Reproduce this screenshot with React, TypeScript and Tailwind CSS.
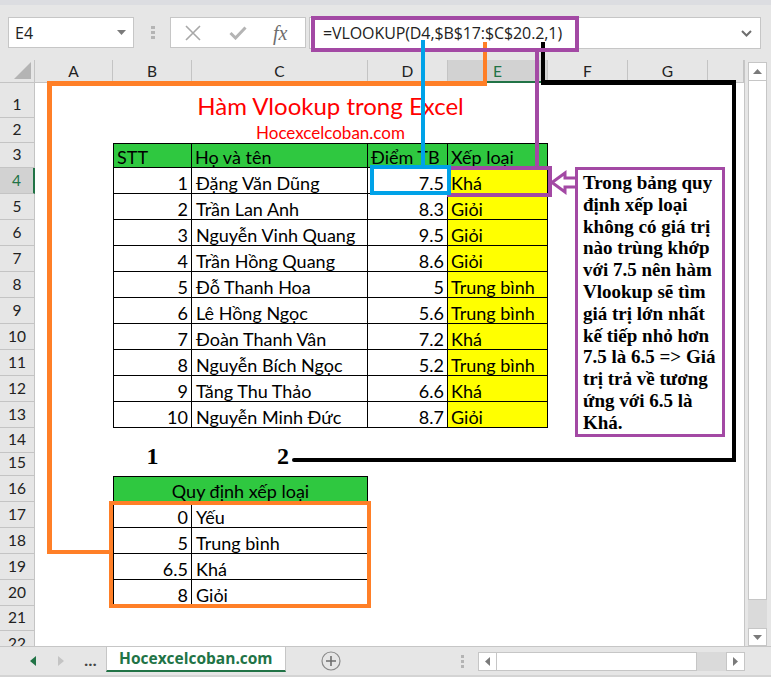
import React from 'react';

type Student = [number, string, string, string];

const students: Student[] = [
  [1, 'Đặng Văn Dũng', '7.5', 'Khá'],
  [2, 'Trần Lan Anh', '8.3', 'Giỏi'],
  [3, 'Nguyễn Vinh Quang', '9.5', 'Giỏi'],
  [4, 'Trần Hồng Quang', '8.6', 'Giỏi'],
  [5, 'Đỗ Thanh Hoa', '5', 'Trung bình'],
  [6, 'Lê Hồng Ngọc', '5.6', 'Trung bình'],
  [7, 'Đoàn Thanh Vân', '7.2', 'Khá'],
  [8, 'Nguyễn Bích Ngọc', '5.2', 'Trung bình'],
  [9, 'Tăng Thu Thảo', '6.6', 'Khá'],
  [10, 'Nguyễn Minh Đức', '8.7', 'Giỏi'],
];

const rules: [string, string][] = [
  ['0', 'Yếu'],
  ['5', 'Trung bình'],
  ['6.5', 'Khá'],
  ['8', 'Giỏi'],
];

const letters = ['A', 'B', 'C', 'D', 'E', 'F', 'G', ''];

function Cell({ className = '', children }: { className?: string; children?: React.ReactNode }) {
  return <div className={`flex items-end whitespace-nowrap overflow-visible ${className}`}>{children}</div>;
}

function Blank() {
  return <div className="bg-white" />;
}

function rowCells(r: number): React.ReactNode[] {
  const k = (c: string) => `${r}-${c}`;
  if (r === 1) {
    return [
      <Blank key={k('a')} />,
      <Cell key={k('t')} className="col-span-4 justify-center text-[24px] leading-[24px] text-[#ff0000]">
        Hàm Vlookup trong Excel
      </Cell>,
      <Blank key={k('f')} />,
      <Blank key={k('g')} />,
      <Blank key={k('h')} />,
    ];
  }
  if (r === 2) {
    return [
      <Blank key={k('a')} />,
      <Cell key={k('t')} className="col-span-4 justify-center text-[17px] leading-[20px] text-[#ff0000]">
        Hocexcelcoban.com
      </Cell>,
      <Blank key={k('f')} />,
      <Blank key={k('g')} />,
      <Blank key={k('h')} />,
    ];
  }
  if (r === 3) {
    const hd = 'bg-[#2fc840] border-t border-r border-b border-black pl-[3px]';
    return [
      <Blank key={k('a')} />,
      <Cell key={k('b')} className={`${hd} border-l`}>STT</Cell>,
      <Cell key={k('c')} className={hd}>Họ và tên</Cell>,
      <Cell key={k('d')} className={hd}>Điểm TB</Cell>,
      <Cell key={k('e')} className={hd}>Xếp loại</Cell>,
      <Blank key={k('f')} />,
      <Blank key={k('g')} />,
      <Blank key={k('h')} />,
    ];
  }
  if (r >= 4 && r <= 13) {
    const [stt, name, score, grade] = students[r - 4];
    return [
      <Blank key={k('a')} />,
      <Cell key={k('b')} className="border-l border-r border-b border-black justify-end pr-[3px]">{stt}</Cell>,
      <Cell key={k('c')} className="border-r border-b border-black pl-[4px]">{name}</Cell>,
      <Cell key={k('d')} className="border-r border-b border-black justify-end pr-[3px]">{score}</Cell>,
      <Cell key={k('e')} className="bg-[#ffff00] border-r border-b border-black pl-[3px]">{grade}</Cell>,
      <Blank key={k('f')} />,
      <Blank key={k('g')} />,
      <Blank key={k('h')} />,
    ];
  }
  if (r === 15) {
    const num = "justify-center pb-[8px] [font-family:'Liberation_Serif',serif] font-bold text-[24px] leading-[24px]";
    return [
      <Blank key={k('a')} />,
      <Cell key={k('b')} className={num}>1</Cell>,
      <Cell key={k('c')} className={`${num} pl-[6px]`}>2</Cell>,
      <Blank key={k('d')} />,
      <Blank key={k('e')} />,
      <Blank key={k('f')} />,
      <Blank key={k('g')} />,
      <Blank key={k('h')} />,
    ];
  }
  if (r === 16) {
    return [
      <Blank key={k('a')} />,
      <Cell key={k('t')} className="col-span-2 justify-center bg-[#2fc840] border border-black">
        Quy định xếp loại
      </Cell>,
      <Blank key={k('d')} />,
      <Blank key={k('e')} />,
      <Blank key={k('f')} />,
      <Blank key={k('g')} />,
      <Blank key={k('h')} />,
    ];
  }
  if (r >= 17 && r <= 20) {
    const [v, label] = rules[r - 17];
    return [
      <Blank key={k('a')} />,
      <Cell key={k('b')} className="border-l border-r border-b border-black justify-end pr-[3px]">{v}</Cell>,
      <Cell key={k('c')} className="border-r border-b border-black pl-[4px]">{label}</Cell>,
      <Blank key={k('d')} />,
      <Blank key={k('e')} />,
      <Blank key={k('f')} />,
      <Blank key={k('g')} />,
      <Blank key={k('h')} />,
    ];
  }
  return letters.map((l, i) => <Blank key={k(`x${i}${l}`)} />);
}

function FormulaBar() {
  return (
    <div className="h-[60px] bg-[#e6e6e6] border-t-[5px] border-[#dcdde1] flex items-start pt-[12px] [font-family:'Open_Sans',sans-serif]">
      {/* name box */}
      <div className="ml-[8px] w-[126px] h-[31px] bg-white border border-[#c6c6c6] flex items-center justify-between pl-[6px] pr-[7px]">
        <span className="text-[16px] text-[#222]">E4</span>
        <svg width="9" height="5" viewBox="0 0 9 5">
          <polygon points="0,0 9,0 4.5,5" fill="#7a7a7a" />
        </svg>
      </div>
      <div className="ml-[17px] mt-[9px] flex flex-col gap-[2px]">
        <div className="w-[4px] h-[3px] bg-[#b4b4b4]" />
        <div className="w-[4px] h-[3px] bg-[#b4b4b4]" />
        <div className="w-[4px] h-[3px] bg-[#b4b4b4]" />
      </div>
      {/* cancel / enter / fx */}
      <div className="ml-[15px] w-[136px] h-[31px] bg-white border border-[#c6c6c6] flex items-center pl-[14px]">
        <svg width="16" height="16" viewBox="0 0 16 16">
          <path d="M1 1 L15 15 M15 1 L1 15" stroke="#a8a8a8" strokeWidth="1.6" />
        </svg>
        <svg className="ml-[28px]" width="18" height="14" viewBox="0 0 18 14">
          <path d="M1.5 7 L6.5 12 L16.5 1.5" stroke="#b4b4b4" strokeWidth="3" fill="none" />
        </svg>
        <span className="ml-[26px] [font-family:'Liberation_Serif',serif] italic text-[20px] text-[#6e6e6e] leading-none">
          fx
        </span>
      </div>
      {/* formula input */}
      <div className="ml-[3px] w-[452px] h-[32px] bg-white border border-[#c6c6c6] flex items-center justify-between pl-[13px] pr-[8px]">
        <span className="text-[16px] text-[#222] tracking-[-0.1px]">=VLOOKUP(D4,$B$17:$C$20.2,1)</span>
        <svg width="11" height="7" viewBox="0 0 11 7">
          <path d="M1 1 L5.5 5.5 L10 1" stroke="#6e6e6e" strokeWidth="2" fill="none" />
        </svg>
      </div>
    </div>
  );
}

function rowHeadClass(r: number) {
  if (r === 4) {
    return 'bg-[#d2d2d2] border-b border-[#c4c4c4] border-r-2 border-r-[#217346] text-[#217346] flex items-end justify-center pb-[3px] text-[15.5px]';
  }
  if (r === 22) {
    return 'bg-[#e6e6e6] border-r border-[#c4c4c4] flex items-start justify-center pt-[2px] overflow-hidden text-[15.5px] text-[#222]';
  }
  return 'bg-[#e6e6e6] border-b border-r border-[#c4c4c4] flex items-end justify-center pb-[3px] text-[15.5px] text-[#222]';
}

function Sheet() {
  const rows = Array.from({ length: 22 }, (_, i) => i + 1);
  return (
    <div className="grid grid-cols-[35px_78px_79px_176px_80px_100px_80px_80px_36px] grid-rows-[23px_35px_25px_25px_repeat(10,26px)_25px_23px_26px_repeat(4,26px)_25px_15px] w-[744px] h-[586px] overflow-hidden bg-white [font-family:Lato,sans-serif] text-[18px] leading-[20px] text-black">
      <div className="bg-[#e6e6e6] border-r border-b border-[#c4c4c4] flex items-end justify-end pr-[3px] pb-[3px]">
        <svg width="17" height="17" viewBox="0 0 17 17">
          <polygon points="17,0 17,17 0,17" fill="#b4b4b4" />
        </svg>
      </div>
      {letters.map((l, i) => (
        <div
          key={`h${i}`}
          className={
            l === 'E'
              ? 'bg-[#d2d2d2] border-r border-[#c4c4c4] border-b-2 border-b-[#217346] text-[#217346] flex items-center justify-center text-[15.5px]'
              : 'bg-[#e6e6e6] border-r border-b border-[#c4c4c4] flex items-center justify-center text-[15.5px] text-[#222]'
          }
        >
          {l}
        </div>
      ))}
      {rows.map((r) => (
        <React.Fragment key={`r${r}`}>
          <div className={rowHeadClass(r)}>{r}</div>
          {rowCells(r)}
        </React.Fragment>
      ))}
    </div>
  );
}

function VScroll() {
  return (
    <div className="w-[27px] h-[586px] bg-[#e6e6e6] border-l border-[#c6c6c6] flex flex-col pl-[3px] pr-[4px] pt-[2px]">
      <div className="h-[19px] bg-white border border-[#c6c6c6] flex items-center justify-center">
        <svg width="9" height="5" viewBox="0 0 9 5">
          <polygon points="0,5 9,5 4.5,0" fill="#7a7a7a" />
        </svg>
      </div>
      <div className="h-[519px] bg-white border border-t-0 border-[#c6c6c6]" />
      <div className="h-[28px] bg-[#dadada]" />
      <div className="h-[18px] bg-white border border-[#c6c6c6] flex items-center justify-center">
        <svg width="9" height="5" viewBox="0 0 9 5">
          <polygon points="0,0 9,0 4.5,5" fill="#7a7a7a" />
        </svg>
      </div>
    </div>
  );
}

function TabBar() {
  return (
    <div className="h-[31px] bg-[#e6e6e6] border-t border-b-2 border-t-[#c6c6c6] border-b-[#d4d4d4] flex items-start [font-family:'Open_Sans',sans-serif]">
      <svg className="ml-[30px] mt-[9px]" width="6" height="10" viewBox="0 0 6 10">
        <polygon points="6,0 6,10 0,5" fill="#217346" />
      </svg>
      <svg className="ml-[22px] mt-[9px]" width="6" height="10" viewBox="0 0 6 10">
        <polygon points="0,0 0,10 6,5" fill="#c4c4c4" />
      </svg>
      <span className="ml-[20px] mt-[1px] text-[15px] font-bold text-[#444] leading-[24px]">...</span>
      <div className="ml-[9px] w-[180px] h-[25px] bg-white border-x border-[#c6c6c6] border-b-2 border-b-[#217346] flex items-center justify-center">
        <span className="text-[15.5px] font-bold text-[#217346]">Hocexcelcoban.com</span>
      </div>
      <svg className="ml-[35px] mt-[4px]" width="20" height="20" viewBox="0 0 20 20">
        <circle cx="10" cy="10" r="9" stroke="#8a8a8a" strokeWidth="1.2" fill="none" />
        <path d="M10 5 V15 M5 10 H15" stroke="#6e6e6e" strokeWidth="1.6" />
      </svg>
      <div className="ml-[120px] mt-[8px] flex flex-col gap-[2px]">
        <div className="w-[3px] h-[3px] bg-[#b4b4b4]" />
        <div className="w-[3px] h-[3px] bg-[#b4b4b4]" />
        <div className="w-[3px] h-[3px] bg-[#b4b4b4]" />
      </div>
      <div className="ml-[14px] mt-[5px] flex h-[19px]">
        <div className="w-[19px] bg-white border border-[#c6c6c6] flex items-center justify-center">
          <svg width="5" height="9" viewBox="0 0 5 9">
            <polygon points="5,0 5,9 0,4.5" fill="#7a7a7a" />
          </svg>
        </div>
        <div className="w-[200px] bg-white border-y border-r border-[#c6c6c6]" />
        <div className="w-[29px] bg-[#dadada]" />
        <div className="w-[19px] bg-white border border-[#c6c6c6] flex items-center justify-center">
          <svg width="5" height="9" viewBox="0 0 5 9">
            <polygon points="0,0 0,9 5,4.5" fill="#7a7a7a" />
          </svg>
        </div>
      </div>
    </div>
  );
}

function Annotations() {
  return (
    <div className="pointer-events-none">
      {/* orange: range B17:C20 */}
      <div className="absolute left-[483px] top-[42px] w-[4px] h-[44px] bg-[#ff7f27]" />
      <div className="absolute left-[47px] top-[81px] w-[440px] h-[5px] bg-[#ff7f27]" />
      <div className="absolute left-[47px] top-[81px] w-[5px] h-[473px] bg-[#ff7f27]" />
      <div className="absolute left-[47px] top-[550px] w-[63px] h-[4px] bg-[#ff7f27]" />
      <div className="absolute left-[109px] top-[501px] w-[262px] h-[107px] border-[4px] border-[#ff7f27]" />

      {/* black: column index */}
      <div className="absolute left-[541px] top-[42px] w-[4px] h-[43px] bg-black" />
      <div className="absolute left-[541px] top-[80px] w-[195px] h-[5px] bg-black" />
      <div className="absolute left-[732px] top-[80px] w-[4px] h-[382px] bg-black" />
      <div className="absolute left-[292px] top-[458px] w-[444px] h-[4px] bg-black rounded-l-full" />

      {/* purple: formula + result */}
      <div className="absolute left-[311px] top-[16px] w-[268px] h-[36px] border-[4px] border-[#a349a4]" />
      <div className="absolute left-[535px] top-[51px] w-[4px] h-[116px] bg-[#a349a4]" />
      <div className="absolute left-[447px] top-[166px] w-[105px] h-[31px] border-[4px] border-[#a349a4]" />
      <svg className="absolute left-[549px] top-[170px]" width="28" height="26" viewBox="0 0 28 26">
        <polygon points="3,12.5 16,3 16,8 28,8 28,17 16,17 16,22" fill="white" stroke="#a349a4" strokeWidth="3" />
      </svg>

      {/* blue: lookup value */}
      <div className="absolute left-[421px] top-[40px] w-[4px] h-[126px] bg-[#00a2e8]" />
      <div className="absolute left-[370px] top-[165px] w-[81px] h-[30px] border-[4px] border-[#00a2e8]" />

      {/* callout */}
      <div className="absolute left-[575px] top-[167px] w-[150px] h-[270px] bg-white border-[3px] border-[#a349a4] pl-[5px] pt-[2px] [font-family:'Liberation_Serif',serif] font-bold text-[19px] leading-[21.8px] text-black whitespace-nowrap">
        Trong bảng quy<br />
        định xếp loại<br />
        không có giá trị<br />
        nào trùng khớp<br />
        với 7.5 nên hàm<br />
        Vlookup sẽ tìm<br />
        giá trị lớn nhất<br />
        kế tiếp nhỏ hơn<br />
        7.5 là 6.5 =&gt; Giá<br />
        trị trả về tương<br />
        ứng với 6.5 là<br />
        Khá.
      </div>
    </div>
  );
}

export default function App() {
  return (
    <div className="relative w-[771px] h-[677px] overflow-hidden bg-[#e6e6e6]">
      <FormulaBar />
      <div className="flex">
        <Sheet />
        <VScroll />
      </div>
      <TabBar />
      <Annotations />
    </div>
  );
}
